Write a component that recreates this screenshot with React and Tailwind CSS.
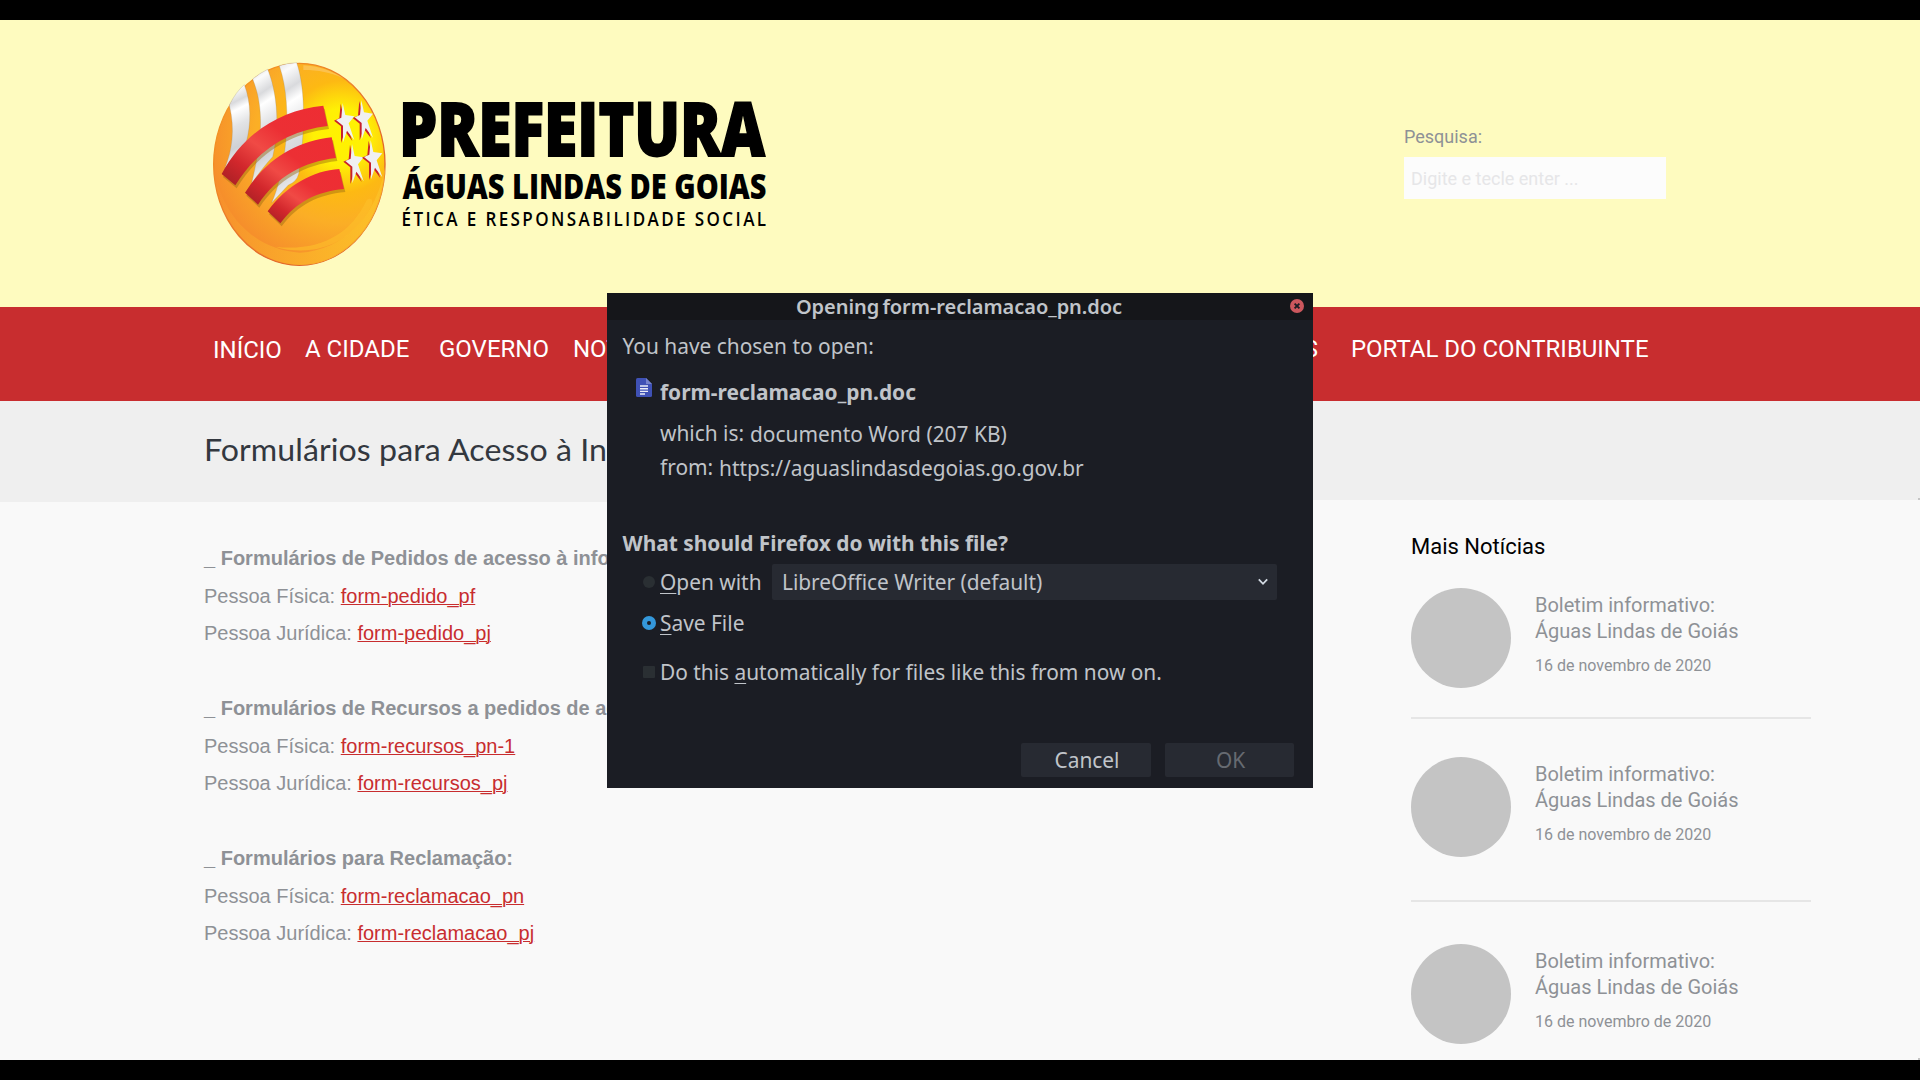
import React from "react";

const STAR =
  "424,160 432,196 459,200 442,221 459,272 437,243 425,278 425,228 404,211 420,204";

const STARS = ["translate(0 0)", "translate(56 -8)", "translate(28 123)", "translate(84 111)"];

function Emblem() {
  return (
    <svg viewBox="0 0 600 690" className="h-[230px] w-[200px] shrink-0">
      <defs>
        <radialGradient id="disc" gradientUnits="userSpaceOnUse" cx="425" cy="260" r="420">
          <stop offset="0" stopColor="#fff200" />
          <stop offset="0.2" stopColor="#fff005" />
          <stop offset="0.4" stopColor="#fdb913" />
          <stop offset="0.62" stopColor="#fbae26" />
          <stop offset="1" stopColor="#f58a2c" />
        </radialGradient>
        <linearGradient id="rim" x1="0" y1="0" x2="1" y2="1">
          <stop offset="0" stopColor="#f9a11f" />
          <stop offset="0.5" stopColor="#e8752a" />
          <stop offset="1" stopColor="#d9532a" />
        </linearGradient>
        <linearGradient id="lowGlow" x1="0" y1="0" x2="1" y2="0.3">
          <stop offset="0" stopColor="#f68b2e" />
          <stop offset="1" stopColor="#fdc428" />
        </linearGradient>
        <linearGradient id="silver" x1="0" y1="0" x2="0.15" y2="1">
          <stop offset="0" stopColor="#dcdde0" />
          <stop offset="0.12" stopColor="#fbfbfb" />
          <stop offset="0.26" stopColor="#d9dadd" />
          <stop offset="0.36" stopColor="#ffffff" />
          <stop offset="0.55" stopColor="#e2e3e5" />
          <stop offset="0.8" stopColor="#cfd1d4" />
          <stop offset="1" stopColor="#f1f1f2" />
        </linearGradient>
        <linearGradient id="red" x1="0" y1="1" x2="1" y2="0">
          <stop offset="0" stopColor="#a31f24" />
          <stop offset="0.22" stopColor="#d2272c" />
          <stop offset="0.42" stopColor="#f04a45" />
          <stop offset="0.62" stopColor="#ec2f34" />
          <stop offset="1" stopColor="#ee2d33" />
        </linearGradient>
        <clipPath id="discClip">
          <ellipse cx="298" cy="343" rx="258" ry="304" />
        </clipPath>
      </defs>
      <ellipse cx="298" cy="343" rx="257" ry="303" fill="url(#disc)" stroke="url(#rim)" strokeWidth="4" />
      <g clipPath="url(#discClip)">
        <path
          d="M42 345C60 500 170 600 300 608C430 600 530 500 555 350C560 520 430 650 298 645C150 640 45 500 42 345Z"
          fill="url(#lowGlow)"
          opacity="0.75"
        />
        <path
          d="M225 590C350 605 450 560 500 450C515 440 520 450 515 465C460 580 340 625 225 590Z"
          fill="#fdc02a"
          opacity="0.6"
        />
        <path d="M310 46C400 50 480 105 520 185L505 150C460 90 400 60 310 60Z" fill="#fbc45a" opacity="0.8" />
      </g>
      <g stroke="#8b8070" strokeOpacity="0.35" strokeWidth="2">
        <path d="M88 165Q108 125 133 104C154 160 154 220 138 280C120 310 90 335 75 355C96 300 106 240 88 165Z" fill="url(#silver)" />
        <path d="M158 87Q178 70 203 58C232 130 240 230 218 320Q190 350 155 400C178 300 200 190 158 87Z" fill="url(#silver)" />
        <path d="M238 47Q262 39 290 38C318 120 315 250 296 372Q290 395 265 405L215 458C252 380 284 180 238 47Z" fill="url(#silver)" />
      </g>
      <g fill="#9a6a10" opacity="0.45" transform="translate(4 9)">
        <path d="M65 372C130 250 240 180 370 167L383 228C270 240 170 300 106 406Z" />
        <path d="M135 428C200 325 290 275 395 262L408 324C310 335 230 380 174 464Z" />
        <path d="M203 484C260 405 340 362 418 357L432 417C350 425 290 455 241 520Z" />
      </g>
      <g fill="url(#red)">
        <path d="M65 372C130 250 240 180 370 167L383 228C270 240 170 300 106 406Z" />
        <path d="M135 428C200 325 290 275 395 262L408 324C310 335 230 380 174 464Z" />
        <path d="M203 484C260 405 340 362 418 357L432 417C350 425 290 455 241 520Z" />
      </g>
      {STARS.map((t) => (
        <g key={t} transform={t}>
          <polygon points={STAR} fill="#c8202a" transform="translate(-2 1)" />
          <polygon points={STAR} fill="#f0f0f1" transform="translate(4 -1)" />
        </g>
      ))}
    </svg>
  );
}

function Wordmark() {
  return (
    <svg
      viewBox="400 90 380 150"
      className="mt-[40px] h-[150px] w-[380px] shrink-0 overflow-visible font-['Open_Sans',sans-serif]"
      fill="#000"
    >
      <text
        x="399"
        y="156.3"
        fontSize="74"
        fontWeight="800"
        stroke="#000"
        strokeWidth="1.8"
        textLength="366"
        lengthAdjust="spacingAndGlyphs"
      >
        PREFEITURA
      </text>
      <text x="402.5" y="199" fontSize="34.5" fontWeight="800" textLength="364" lengthAdjust="spacingAndGlyphs">
        ÁGUAS LINDAS DE GOIAS
      </text>
      <text transform="translate(401.5 226) scale(0.84 1)" fontSize="20.3" fontWeight="600" textLength="434">
        ÉTICA E RESPONSABILIDADE SOCIAL
      </text>
    </svg>
  );
}

const GROUPS = [
  ["_ Formulários de Pedidos de acesso à informação:", "form-pedido_pf", "form-pedido_pj"],
  ["_ Formulários de Recursos a pedidos de acesso:", "form-recursos_pn-1", "form-recursos_pj"],
  ["_ Formulários para Reclamação:", "form-reclamacao_pn", "form-reclamacao_pj"],
];

function FormLine({ label, link }) {
  return (
    <p>
      {label}{" "}
      <a className="text-[#c82d2f] underline decoration-1 underline-offset-[1px]">{link}</a>
    </p>
  );
}

function NewsItem() {
  return (
    <article className="flex h-[100px] gap-6">
      <div className="size-[100px] shrink-0 rounded-full bg-[#c4c4c4]" />
      <div className="pt-1">
        <h3 className="text-[20px] leading-[26px]">
          Boletim informativo:
          <br />
          Águas Lindas de Goiás
        </h3>
        <p className="mt-3 text-[16px] leading-[20px]">16 de novembro de 2020</p>
      </div>
    </article>
  );
}

function Dialog() {
  return (
    <div className="absolute left-[607px] top-[293px] h-[495px] w-[706px] bg-[#1b1d24] font-['Noto_Sans',sans-serif] text-[20.9px] leading-[30px] whitespace-nowrap text-[#c0c4c9]">
      <div className="relative h-[27px] bg-[#15161a] text-center text-[20px] leading-[27px] font-semibold tracking-[-0.04px] [word-spacing:-2px]">
        <span className="pr-0.5">Opening form-reclamacao_pn.doc</span>
        <svg viewBox="0 0 14 14" className="absolute top-[6px] right-[9px] size-[14px]">
          <circle cx="7" cy="7" r="7" fill="#cc575d" />
          <path d="M4.6 4.6L9.4 9.4M9.4 4.6L4.6 9.4" stroke="#1b1d24" strokeWidth="1.9" />
        </svg>
      </div>

      <p className="mt-[11px] pl-[15.5px]">You have chosen to open:</p>

      <div className="mt-4 flex pl-[29px]">
        <svg viewBox="0 0 16 19" className="mt-px h-[19px] w-4">
          <path d="M0 1.5Q0 0 1.5 0H10L16 6V17.5Q16 19 14.5 19H1.5Q0 19 0 17.5Z" fill="#3f51b5" />
          <path d="M10 0L16 6H10Z" fill="#7683cc" />
          <path d="M4 8H12M4 10.7H12M4 13.4H12M4 16H9" stroke="#eceef8" strokeWidth="1.4" />
        </svg>
        <b className="ml-2">form-reclamacao_pn.doc</b>
      </div>

      <div className="mt-[11px] flex pl-[53px]">
        <span className="w-[90px]">which is:</span>
        <span className="pt-px">documento Word (207 KB)</span>
      </div>
      <div className="mt-[3px] flex pl-[53px]">
        <span className="w-[59px]">from:</span>
        <span className="pt-px tracking-[-0.02px]">https://aguaslindasdegoias.go.gov.br</span>
      </div>

      <p className="mt-[45px] pl-[15.5px] font-bold">What should Firefox do with this file?</p>

      <div className="mt-[6px] flex h-9 items-center pl-9">
        <i className="size-3 rounded-full bg-[#2a2f33]" />
        <span className="ml-[5px] w-[112px]">
          <u className="decoration-1 underline-offset-[3px]">O</u>pen with
        </span>
        <div className="flex h-9 w-[505px] items-center justify-between rounded-xs bg-[#272a32] pr-[9px] pl-[10px]">
          <span className="tracking-[-0.03px]">LibreOffice Writer (default)</span>
          <svg viewBox="0 0 10 8" className="h-2 w-[10px]" fill="none" stroke="#d3dae3" strokeWidth="1.8">
            <path d="M0.8 1.3L5 5.8L9.2 1.3" />
          </svg>
        </div>
      </div>

      <div className="mt-2 flex items-center pl-[35px]">
        <i className="flex size-[14px] items-center justify-center rounded-full bg-[#3498db]">
          <i className="size-1 rounded-full bg-[#1b1d24]" />
        </i>
        <span className="ml-1">
          <u className="decoration-1 underline-offset-[3px]">S</u>ave File
        </span>
      </div>

      <div className="mt-[19px] flex items-center pl-9">
        <i className="size-3 rounded-[1px] bg-[#2a2f33]" />
        <span className="ml-[5px] tracking-[-0.02px]">
          Do this <u className="decoration-1 underline-offset-[3px]">a</u>utomatically for files like this from now on.
        </span>
      </div>

      <div className="mt-[56px] flex justify-end gap-[14px] pr-[19px] text-center leading-[34px]">
        <div className="h-[34px] w-[130px] rounded-xs bg-[#272a32] pl-0.5">Cancel</div>
        <div className="h-[34px] w-[129px] rounded-xs bg-[#272a32] pl-0.5 text-[#666a71]">OK</div>
      </div>
    </div>
  );
}

export default function App() {
  return (
    <div className="relative flex h-[1080px] w-[1920px] flex-col overflow-hidden bg-black py-5 font-['Roboto',sans-serif] text-[#8e9196]">
      <header className="flex h-[287px] shrink-0 bg-[#fefbbf] pt-[30px] pl-[200px]">
        <Emblem />
        <Wordmark />
        <div className="ml-[624px] pt-[75px]">
          <p className="text-[18px] leading-[24px]">Pesquisa:</p>
          <div className="mt-[8px] h-[42px] w-[262px] bg-[#fcfcfc] pl-[7px] text-[18px] leading-[43px] text-[#e6e6e8]">
            Digite e tecle enter ...
          </div>
        </div>
      </header>

      <nav className="flex h-[94px] shrink-0 bg-[#c82d2f] pt-[27px] pl-[213px] text-[24px] leading-[30px] whitespace-nowrap text-white">
        <span className="w-[92px] pt-px">INÍCIO</span>
        <span className="w-[134px]">A CIDADE</span>
        <span className="w-[134px]">GOVERNO</span>
        <span className="w-[400px]">NOTÍCIAS</span>
        <span className="w-[345px] text-right">SERVIÇOS</span>
        <span className="ml-[33px] tracking-[-0.02px]">PORTAL DO CONTRIBUINTE</span>
      </nav>

      <div className="flex h-[99px] shrink-0 items-end justify-between bg-[#efefef]">
        <h1 className="mb-[31px] ml-[203.5px] origin-left scale-x-[1.07] font-['Lato',sans-serif] text-[30px] leading-[40px] tracking-[0.07px] whitespace-nowrap text-[#33383f]">
          Formulários para Acesso à In
        </h1>
        <i className="size-0.5 bg-[#c4c4c4]" />
      </div>

      <main className="flex h-[560px] bg-[#f9f9f9]">
        <section className="w-[1411px]">
          <div className="h-0.5 w-[1000px] bg-[#efefef]" />
          <div className="flex flex-col gap-[37.5px] pt-[38px] pl-[204px] font-['Liberation_Sans',sans-serif] text-[20px] leading-[37.5px]">
            {GROUPS.map(([title, pf, pj]) => (
              <div key={title}>
                <p className="font-bold">{title}</p>
                <FormLine label="Pessoa Física:" link={pf} />
                <FormLine label="Pessoa Jurídica:" link={pj} />
              </div>
            ))}
          </div>
        </section>
        <aside className="w-[400px] pt-8">
          <h2 className="mb-[26px] text-[22px] leading-[30px] text-black">Mais Notícias</h2>
          <NewsItem />
          <hr className="mt-[29px] mb-[38px] border-t-2 border-[#e6e6e6]" />
          <NewsItem />
          <hr className="mt-[43px] mb-[42px] border-t-2 border-[#e6e6e6]" />
          <NewsItem />
        </aside>
        <i className="ml-auto size-0.5 self-end bg-[#c4c4c4]" />
      </main>

      <Dialog />
    </div>
  );
}
